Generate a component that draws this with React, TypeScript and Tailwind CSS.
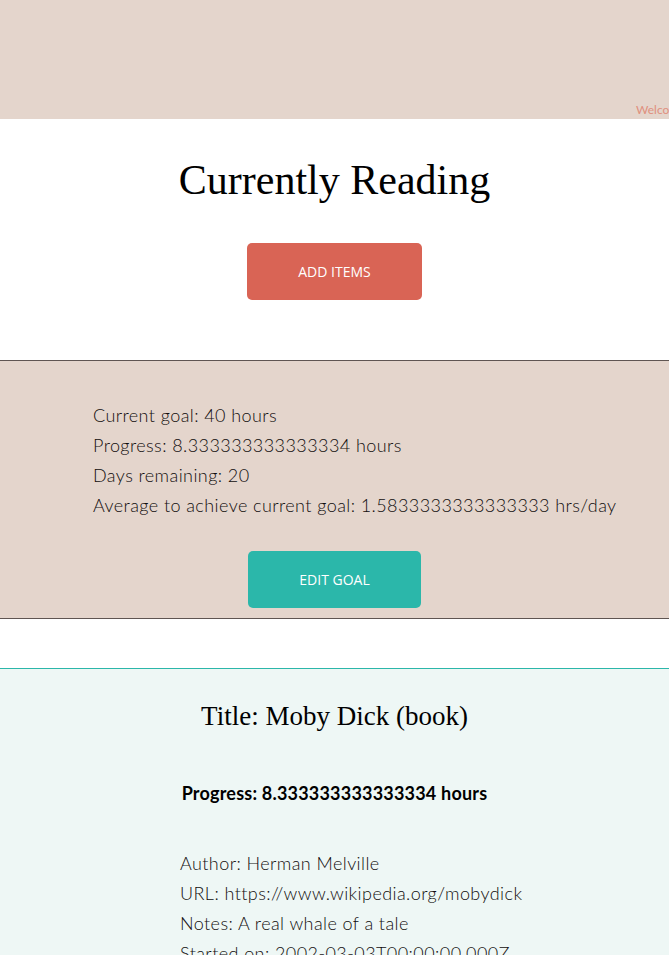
import React from "react";

export default function App() {
  const body = { fontFamily: "Lato, 'Open Sans', sans-serif" };
  const serif = { fontFamily: "'Liberation Serif', 'DejaVu Serif', serif" };
  const btn = { fontFamily: "'Open Sans', Lato, sans-serif" };
  return (
    <div className="w-[669px] h-[955px] overflow-hidden bg-white text-[#1c1a1a]" style={body}>
      <header className="h-[119px] bg-[#e4d5cc] relative">
        <span className="absolute left-[636px] top-[101px] text-[12px] text-[#e0907e] whitespace-nowrap">Welcome, reader</span>
      </header>
      <section className="h-[241px] flex flex-col items-center pt-[35px]">
        <h1 className="text-[42px] leading-[52px] text-black" style={serif}>Currently Reading</h1>
        <button className="mt-[37px] w-[175px] h-[57px] rounded-[5px] bg-[#d96455] text-white text-[14px]" style={btn}>ADD ITEMS</button>
      </section>
      <section className="h-[259px] bg-[#e4d5cc] border-t border-b border-[#5f5552] flex flex-col">
        <div className="pl-[93px] pt-[39px] text-[18px] font-light tracking-[0.42px] leading-[30px] text-[#120e0e]">
          <p>Current goal: 40 hours</p>
          <p>Progress: 8.333333333333334 hours</p>
          <p>Days remaining: 20</p>
          <p>Average to achieve current goal: 1.5833333333333333 hrs/day</p>
        </div>
        <div className="flex justify-center mt-[31px]">
          <button className="w-[173px] h-[57px] rounded-[5px] bg-[#2bb7aa] text-white text-[14px]" style={btn}>EDIT GOAL</button>
        </div>
      </section>
      <div className="h-[49px]" />
      <section className="border-t border-[#2bb7aa] bg-[#eef7f5] h-[400px]">
        <h2 className="text-center text-[27px] leading-[34px] mt-[30px] text-black" style={serif}>Title: Moby Dick (book)</h2>
        <p className="text-center font-bold text-[18px] tracking-[0.2px] leading-[24px] mt-[48px] text-black">Progress: 8.333333333333334 hours</p>
        <div className="pl-[180px] mt-[43px] text-[18px] font-light tracking-[0.42px] leading-[30px] text-[#120e0e]">
          <p>Author: Herman Melville</p>
          <p>URL: https://www.wikipedia.org/mobydick</p>
          <p>Notes: A real whale of a tale</p>
          <p>Started on: 2002-03-03T00:00:00.000Z</p>
        </div>
      </section>
    </div>
  );
}
